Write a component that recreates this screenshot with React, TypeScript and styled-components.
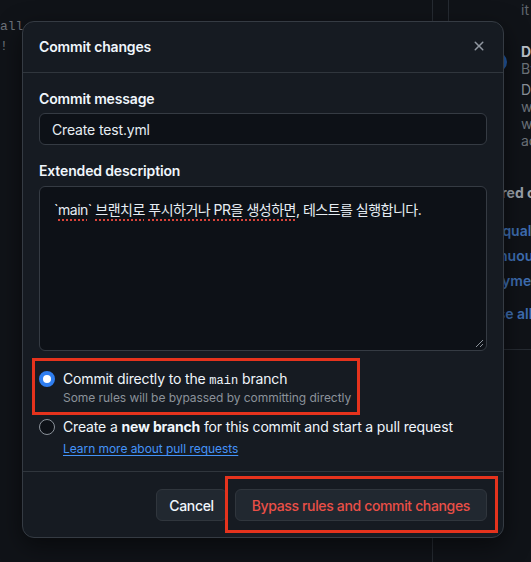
import React from 'react';
import styled, { createGlobalStyle } from 'styled-components';

const GlobalStyle = createGlobalStyle`
  html, body {
    margin: 0;
    padding: 0;
    width: 531px;
    height: 562px;
    overflow: hidden;
    background: #101318;
  }
  body {
    font-family: Inter, "Noto Sans", "Noto Sans CJK KR", sans-serif;
    -webkit-font-smoothing: antialiased;
  }
  * { box-sizing: border-box; }
`;

const Page = styled.div`
  position: relative;
  width: 531px;
  height: 562px;
  display: flex;
  background: #101318;
  overflow: hidden;
`;

const MainCol = styled.div`
  flex: none;
  width: 433px;
  border-right: 1px solid #262b32;
  padding-top: 17px;
`;

const CodeLine = styled.div`
  font-family: "Liberation Mono", "DejaVu Sans Mono", monospace;
  font-size: 13px;
  line-height: 20px;
  color: #6b7178;
  white-space: pre;
`;

const Sidebar = styled.div`
  flex: none;
  width: 98px;
  display: flex;
  flex-direction: column;
  font-size: 14px;
  white-space: nowrap;
`;

const SideHead = styled.div`
  margin-left: 15px;
  border-left: 1px solid #262b32;
  height: 30px;
  padding-left: 72px;
  line-height: 20px;
  color: #5f666e;
`;

const ActionItem = styled.div`
  display: flex;
  gap: 14px;
  margin-left: 54px;
  margin-top: 13px;
`;

const Avatar = styled.div`
  flex: none;
  width: 20px;
  height: 20px;
  border-radius: 50%;
  background: #2359a3;
  margin-top: 9px;
`;

const ActionText = styled.div`
  display: flex;
  flex-direction: column;
  line-height: 17px;
  color: #6b7178;
`;

const ActionTitle = styled.div`
  font-weight: 700;
  color: #b9bfc6;
`;

const ActionDesc = styled.div`
  color: #8a9098;
  margin-top: 4px;
`;

const Featured = styled.div`
  margin-top: 34px;
  padding-left: 30px;
  padding-bottom: 25px;
  border-bottom: 1px solid #262b32;
  display: flex;
  flex-direction: column;
`;

const FeaturedTitle = styled.div`
  font-weight: 700;
  color: #9aa1a9;
  line-height: 20px;
  margin-bottom: 18px;
`;

const SideLink = styled.div<{ $gap?: number }>`
  color: #3e6db0;
  font-weight: 600;
  line-height: 20px;
  margin-top: ${(p) => p.$gap ?? 5}px;
`;

const Dialog = styled.div`
  position: absolute;
  left: 22px;
  top: 21px;
  width: 482px;
  background: #161b22;
  border: 1px solid #353b43;
  border-radius: 12px;
  box-shadow: 0 8px 24px rgba(0, 0, 0, 0.5);
  color: #e6edf3;
  letter-spacing: -0.15px;
`;

const Header = styled.div`
  height: 51px;
  display: flex;
  align-items: center;
  justify-content: space-between;
  padding: 0 8px 0 16px;
  border-bottom: 1px solid #30363d;
`;

const Title = styled.h1`
  margin: 0;
  font-size: 14px;
  font-weight: 600;
  line-height: 20px;
  color: #f0f6fc;
`;

const CloseButton = styled.button`
  width: 32px;
  height: 32px;
  display: flex;
  align-items: center;
  justify-content: center;
  background: transparent;
  border: none;
  padding: 0;
  margin-top: -2px;
  color: #9198a1;
`;

const Body = styled.div`
  padding: 16px 16px 13px;
  display: flex;
  flex-direction: column;
`;

const Label = styled.div<{ $top?: number }>`
  font-size: 14px;
  font-weight: 600;
  line-height: 20px;
  color: #f0f6fc;
  margin-top: ${(p) => p.$top ?? 0}px;
`;

const Input = styled.div`
  margin-top: 4px;
  height: 32px;
  border: 1px solid #353b43;
  border-radius: 6px;
  background: #0d1117;
  padding: 0 12px;
  display: flex;
  align-items: center;
  font-size: 14px;
  color: #e6edf3;
`;

const TextArea = styled.div`
  position: relative;
  margin-top: 5px;
  height: 165px;
  border: 1px solid #353b43;
  border-radius: 6px;
  background: #0d1117;
  padding: 13px 14px;
  font-size: 14px;
  line-height: 20px;
  letter-spacing: -0.5px;
  color: #e6edf3;
  white-space: nowrap;
`;

const Spell = styled.span`
  text-decoration: underline dotted #d9443a;
  text-decoration-thickness: 1.5px;
  text-underline-offset: 4px;
`;

const Grip = styled.svg`
  position: absolute;
  right: 2px;
  bottom: 2px;
`;

const Options = styled.div`
  margin-top: 18px;
  display: flex;
  flex-direction: column;
  gap: 10px;
`;

const Option = styled.label`
  display: flex;
  gap: 8px;
  align-items: flex-start;
`;

const Radio = styled.span<{ $checked?: boolean }>`
  flex: none;
  width: 16px;
  height: 16px;
  margin-top: 2px;
  border-radius: 50%;
  border: ${(p) => (p.$checked ? '4.5px solid #2f7ef0' : '1px solid #8b929a')};
  background: ${(p) => (p.$checked ? '#ffffff' : '#0d1117')};
`;

const OptionText = styled.div`
  display: flex;
  flex-direction: column;
`;

const OptionLabel = styled.div`
  font-size: 14px;
  line-height: 20px;
  color: #f0f6fc;
  white-space: nowrap;
`;

const Mono = styled.code`
  font-family: "Liberation Mono", "DejaVu Sans Mono", monospace;
  font-size: 12px;
  line-height: 1;
  letter-spacing: 0;
`;

const Hint = styled.div`
  font-size: 12px;
  line-height: 18px;
  letter-spacing: -0.05px;
  color: #8b929a;
`;

const LearnLink = styled.a`
  font-size: 12px;
  line-height: 18px;
  letter-spacing: -0.05px;
  margin-top: 3px;
  color: #4493f8;
  text-decoration: underline;
  text-underline-offset: 2px;
`;

const Footer = styled.div`
  border-top: 1px solid #30363d;
  padding: 17px 16px 16px;
  display: flex;
  justify-content: flex-end;
  gap: 8px;
`;

const Button = styled.button<{ $danger?: boolean }>`
  height: 32px;
  padding: 0 ${(p) => (p.$danger ? 16 : 12)}px;
  border-radius: 6px;
  border: 1px solid #30363d;
  background: #212830;
  font-family: inherit;
  font-size: 14px;
  font-weight: 500;
  letter-spacing: -0.35px;
  color: ${(p) => (p.$danger ? '#ea4f47' : '#f0f6fc')};
`;

const Highlight = styled.div`
  position: absolute;
  border: 3px solid #e5331d;
  pointer-events: none;
`;

const XIcon = () => (
  <svg width="16" height="16" viewBox="0 0 16 16" fill="currentColor">
    <path d="M3.72 3.72a.75.75 0 0 1 1.06 0L8 6.94l3.22-3.22a.749.749 0 0 1 1.275.326.749.749 0 0 1-.215.734L9.06 8l3.22 3.22a.749.749 0 0 1-.326 1.275.749.749 0 0 1-.734-.215L8 9.06l-3.22 3.22a.751.751 0 0 1-1.042-.018.751.751 0 0 1-.018-1.042L6.94 8 3.72 4.78a.75.75 0 0 1 0-1.06Z" />
  </svg>
);

export default function App() {
  return (
    <>
      <GlobalStyle />
      <Page>
        <MainCol>
          <CodeLine>all</CodeLine>
          <CodeLine>!</CodeLine>
        </MainCol>
        <Sidebar>
          <SideHead>it</SideHead>
          <ActionItem>
            <Avatar />
            <ActionText>
              <ActionTitle>Deploy to Pages</ActionTitle>
              <div>By GitHub Actions</div>
              <ActionDesc>Deploy a static site</ActionDesc>
              <div>with a workflow</div>
              <div>without a build</div>
              <div>action</div>
            </ActionText>
          </ActionItem>
          <Featured>
            <FeaturedTitle>Featured categories</FeaturedTitle>
            <SideLink $gap={0}>Code quality</SideLink>
            <SideLink>Continuous integration</SideLink>
            <SideLink>Deployment</SideLink>
            <SideLink $gap={13}>Browse all actions</SideLink>
          </Featured>
        </Sidebar>

        <Dialog>
          <Header>
            <Title>Commit changes</Title>
            <CloseButton aria-label="Close">
              <XIcon />
            </CloseButton>
          </Header>
          <Body>
            <Label>Commit message</Label>
            <Input>Create test.yml</Input>
            <Label $top={16}>Extended description</Label>
            <TextArea>
              `<Spell>main</Spell>` <Spell>브랜치로</Spell> <Spell>푸시하거나</Spell>{' '}
              <Spell>PR을 생성하면</Spell>, 테스트를 실행합니다.
              <Grip width="9" height="9" viewBox="0 0 9 9">
                <path d="M8 1L1 8M8 5L5 8" stroke="#8b929a" strokeWidth="1" />
              </Grip>
            </TextArea>
            <Options>
              <Option>
                <Radio $checked />
                <OptionText>
                  <OptionLabel>
                    Commit directly to the <Mono>main</Mono> branch
                  </OptionLabel>
                  <Hint>Some rules will be bypassed by committing directly</Hint>
                </OptionText>
              </Option>
              <Option>
                <Radio />
                <OptionText>
                  <OptionLabel>
                    Create a <b>new branch</b> for this commit and start a pull request
                  </OptionLabel>
                  <LearnLink>Learn more about pull requests</LearnLink>
                </OptionText>
              </Option>
            </Options>
          </Body>
          <Footer>
            <Button>Cancel</Button>
            <Button $danger>Bypass rules and commit changes</Button>
          </Footer>
          <Highlight style={{ left: 8.5, top: 335.5, width: 328, height: 57 }} />
          <Highlight style={{ left: 201.5, top: 454, width: 273, height: 57 }} />
        </Dialog>
      </Page>
    </>
  );
}
